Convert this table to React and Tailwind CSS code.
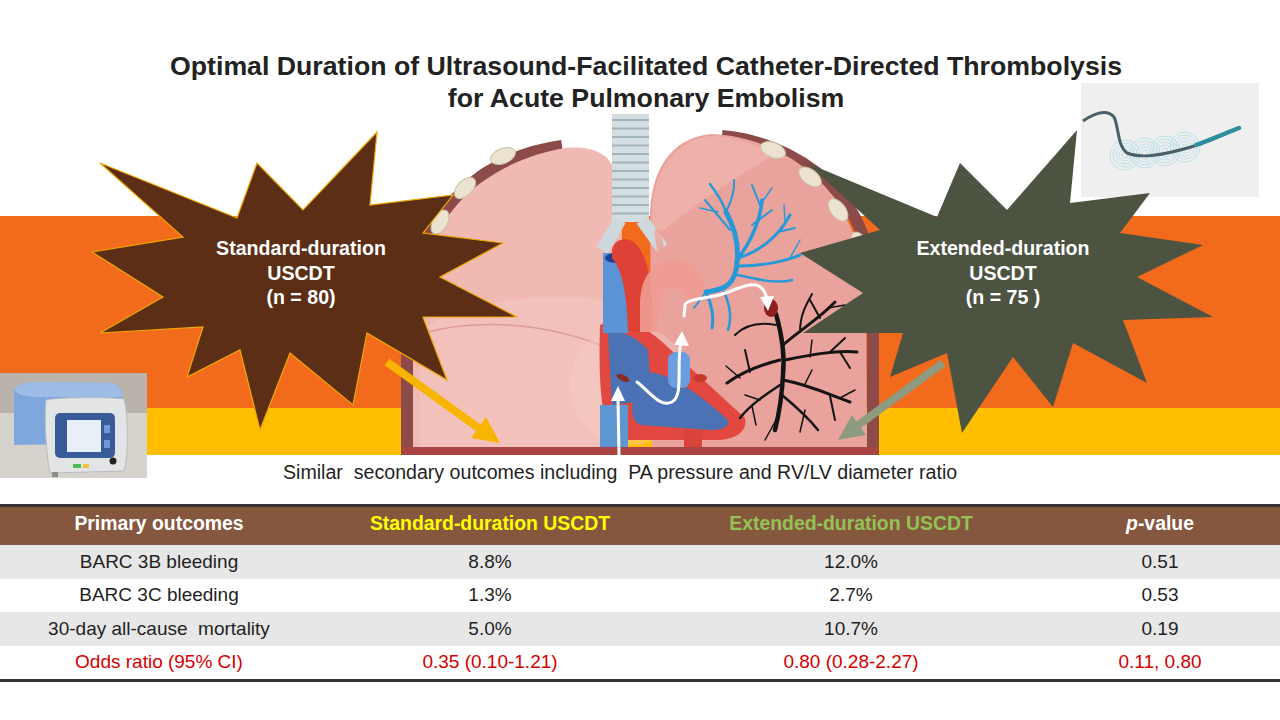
import React from "react"

const rows = [
  { label: "BARC 3B bleeding", std: "8.8%", ext: "12.0%", p: "0.51", shade: true },
  { label: "BARC 3C bleeding", std: "1.3%", ext: "2.7%", p: "0.53" },
  { label: "30-day all-cause  mortality", std: "5.0%", ext: "10.7%", p: "0.19", shade: true },
]

const leftStar =
  "100,163 237,218 257,163 303,210 377,132 370,205 453,195 423,233 503,243 440,277 517,317 423,317 447,380 367,333 353,405 290,353 260,430 240,350 187,377 203,327 100,333 163,297 92,252 183,237"
const rightStar =
  "807,163 937,217 960,163 1007,210 1077,130 1070,203 1150,193 1120,233 1203,245 1137,277 1213,317 1123,320 1147,383 1073,343 1053,407 1013,357 962,433 947,353 890,377 903,333 803,333 863,293 800,253 880,230"

const ribs = [
  [503, 156, -22],
  [465, 188, -45],
  [440, 222, -62],
  [773, 150, 22],
  [810, 177, 38],
  [838, 210, 52],
  [860, 244, 62],
]

function Lungs() {
  return (
    <svg className="absolute left-[400px] top-[112px]" width="480" height="345" viewBox="400 112 480 345">
      {/* ribcage rim */}
      <path d="M407,455 L407,330 C408,262 437,208 480,177 C505,160 532,150 562,146" stroke="#8c4b49" strokeWidth="12" fill="none" />
      <path d="M722,136 C768,140 812,162 840,195 C860,220 872,252 873,292 L873,455" stroke="#8c4b49" strokeWidth="12" fill="none" />
      {/* left lung */}
      <path d="M413,455 L413,335 C414,265 440,212 482,182 C510,162 540,152 565,148 C590,146 605,152 612,165 C620,180 622,205 622,245 L628,455 Z" fill="#f0bab3" />
      <path d="M420,330 C470,300 540,292 606,300 L616,455 L420,455 Z" fill="#f4c7c1" opacity="0.55" />
      <path d="M418,335 C470,318 540,322 600,345" stroke="#dc9d96" strokeWidth="1.5" fill="none" />
      {/* right lung */}
      <path d="M652,455 L650,212 C652,160 680,136 712,134 C760,136 805,160 832,195 C852,222 864,255 866,300 L867,455 Z" fill="#eaa39c" />
      <path d="M652,210 C655,165 680,138 712,136 C740,137 760,146 772,156 C740,175 700,200 652,240 Z" fill="#f0b7b0" opacity="0.7" />
      {ribs.map(([cx, cy, r], i) => (
        <ellipse key={i} cx={cx} cy={cy} rx="13" ry="7.5" transform={`rotate(${r} ${cx} ${cy})`} fill="#ebe3d0" stroke="#c9bea6" strokeWidth="1" />
      ))}
      {/* trachea */}
      <rect x="612" y="114" width="37" height="108" fill="#d4dde1" />
      {Array.from({ length: 12 }).map((_, i) => (
        <line key={i} x1="612" x2="649" y1={120 + i * 8.5} y2={120 + i * 8.5} stroke="#a3b3ba" strokeWidth="2" />
      ))}
      <path d="M620,220 L602,250" stroke="#cfd8dc" strokeWidth="13" />
      <path d="M642,220 L662,248" stroke="#cfd8dc" strokeWidth="13" />
      {/* heart */}
      <circle cx="630" cy="385" r="60" fill="#f6d0ca" opacity="0.35" />
      <path d="M600,325 C615,318 640,322 660,340 L745,418 C748,432 735,440 715,440 L620,440 C603,430 598,400 600,325 Z" fill="#e2483f" />
      <path d="M608,333 C620,330 635,335 648,350 L652,400 L612,405 Z" fill="#4a72b4" />
      <path d="M645,372 C670,372 700,395 728,420 C730,428 720,430 710,430 L640,425 C628,420 630,395 645,372 Z" fill="#4a72b4" />
      <rect x="603" y="253" width="26" height="80" fill="#5a93d6" />
      <ellipse cx="616" cy="258" rx="11" ry="5" fill="#1f3e92" />
      <rect x="600" y="405" width="28" height="50" fill="#5e96d4" />
      <rect x="684" y="430" width="18" height="25" fill="#d8443c" />
      <path d="M612,250 C614,238 628,236 636,244 C650,260 654,292 652,332 L628,332 C627,300 624,272 612,258 Z" fill="#de4136" />
      <path d="M658,232 L662,262 M672,228 L674,262 M686,232 L684,262" stroke="#eda49b" strokeWidth="7" opacity="0.8" strokeLinecap="round" />
      <path d="M640,305 C640,275 656,258 678,260 C700,262 708,284 706,302 L688,304 C686,292 676,285 666,290 C658,296 658,318 658,332 L640,332 Z" fill="#ef9c93" opacity="0.9" />
      <rect x="668" y="352" width="22" height="36" rx="8" fill="#6a9ee0" />
      <ellipse cx="623" cy="378" rx="7" ry="3" transform="rotate(25 623 378)" fill="#8c2a24" />
      <ellipse cx="700" cy="378" rx="7" ry="4" fill="#c7382f" />
      {/* blue pulmonary tree */}
      <g stroke="#2799d8" fill="none" strokeLinecap="round">
        <path d="M706,292 C720,290 732,288 736,270 C740,250 736,230 726,212" strokeWidth="5" />
        <path d="M736,262 C748,245 760,225 762,200" strokeWidth="3.5" />
        <path d="M738,258 C758,252 778,238 790,215" strokeWidth="3" />
        <path d="M740,266 C765,266 788,260 800,255" strokeWidth="3" />
        <path d="M738,275 C760,280 778,284 792,280" strokeWidth="2.5" />
        <path d="M726,212 C722,200 716,192 710,184" strokeWidth="2.5" />
        <path d="M726,212 C732,200 735,190 734,180" strokeWidth="2" />
        <path d="M730,230 L705,200" strokeWidth="2" />
        <path d="M718,212 L700,208" strokeWidth="1.5" />
        <path d="M752,225 L772,210" strokeWidth="2" />
        <path d="M760,205 L752,185" strokeWidth="2" />
        <path d="M760,205 L772,188" strokeWidth="1.5" />
        <path d="M778,232 L795,228" strokeWidth="2" />
        <path d="M785,222 L784,205" strokeWidth="1.5" />
        <path d="M790,258 L800,240" strokeWidth="1.5" />
        <path d="M706,292 C712,305 714,318 712,328" strokeWidth="3" />
        <path d="M724,292 C730,305 732,318 728,330" strokeWidth="2.5" />
        <path d="M706,292 L694,308" strokeWidth="2" />
      </g>
      {/* black tree */}
      <g stroke="#141414" fill="none" strokeLinecap="round">
        <path d="M776,314 C782,335 785,355 783,375 C782,395 780,410 775,430" strokeWidth="4.5" />
        <path d="M783,345 C800,330 820,318 835,302" strokeWidth="3" />
        <path d="M785,360 C810,355 835,350 857,352" strokeWidth="3" />
        <path d="M783,380 C810,385 830,395 850,402" strokeWidth="3" />
        <path d="M782,395 C800,410 810,420 818,430" strokeWidth="2.5" />
        <path d="M780,360 C760,365 742,372 727,383" strokeWidth="3" />
        <path d="M780,385 C765,395 750,405 740,418" strokeWidth="2.5" />
        <path d="M776,325 C760,322 745,325 735,335" strokeWidth="2" />
        <path d="M750,372 L745,350" strokeWidth="2" />
        <path d="M740,378 L726,366" strokeWidth="1.5" />
        <path d="M760,400 L745,395" strokeWidth="1.5" />
        <path d="M752,406 L756,425" strokeWidth="1.5" />
        <path d="M820,318 L810,300" strokeWidth="2" />
        <path d="M828,308 L845,305" strokeWidth="1.5" />
        <path d="M830,352 L845,338" strokeWidth="2" />
        <path d="M840,352 L850,368" strokeWidth="2" />
        <path d="M830,396 L835,420" strokeWidth="2" />
        <path d="M840,398 L855,390" strokeWidth="1.5" />
        <path d="M805,410 L800,432" strokeWidth="1.5" />
        <path d="M776,420 L765,440" strokeWidth="1.5" />
        <path d="M800,332 C800,315 806,305 812,294" strokeWidth="2" />
        <path d="M810,357 L812,340" strokeWidth="1.5" />
        <path d="M805,384 L812,370" strokeWidth="1.5" />
      </g>
      <ellipse cx="771" cy="308" rx="7" ry="9" fill="#8e1e1e" />
      {/* diaphragm */}
      <rect x="402" y="447" width="476" height="8" fill="#a94442" />
      {/* flow arrows */}
      <g stroke="#ffffff" strokeWidth="3" fill="none" strokeLinecap="round">
        <path d="M619,455 L618,398" />
        <path d="M637,382 C650,392 660,408 672,402 C684,395 676,365 681,342" />
        <path d="M684,316 L685,305 C686,300 700,299 715,296 C730,293 745,283 756,285 C764,287 766,294 767,300" />
      </g>
      <g fill="#ffffff">
        <polygon points="618,386 611,401 625,401" />
        <polygon points="682,331 674,345 689,346" />
        <polygon points="768,311 760,297 774,296" />
      </g>
    </svg>
  )
}

function Device() {
  return (
    <svg className="absolute left-0 top-[373px]" width="147" height="105" viewBox="0 0 147 105">
      <rect width="147" height="105" fill="#d6d2cc" />
      <rect width="147" height="40" fill="#b9b3ab" />
      <path d="M14,16 C18,10 28,9 40,9 L110,10 C118,11 122,16 122,24 L122,70 L14,72 Z" fill="#7fa7dd" />
      <path d="M14,16 C18,10 28,9 40,9 L110,10 C118,11 122,16 122,24 L40,24 C26,24 16,22 14,16 Z" fill="#9dbde8" />
      <path d="M46,27 C60,24 110,24 124,26 C128,40 129,80 124,98 L50,100 C46,80 44,45 46,27 Z" fill="#e3e4e6" stroke="#b9bcc2" strokeWidth="1" />
      <rect x="55" y="40" width="60" height="45" rx="5" fill="#3a5b9a" />
      <rect x="67" y="47" width="34" height="32" fill="#e9eff6" />
      <rect x="104" y="52" width="6" height="8" fill="#6f9ad6" />
      <rect x="104" y="67" width="6" height="8" fill="#6f9ad6" />
      <rect x="73" y="91" width="8" height="4" fill="#4bbb55" />
      <rect x="83" y="91" width="6" height="4" fill="#f1c23c" />
      <circle cx="113" cy="88" r="3.5" fill="#222" />
      <rect x="52" y="99" width="6" height="5" fill="#8c8c8c" />
    </svg>
  )
}

function Catheter() {
  return (
    <svg className="absolute left-[1081px] top-[83px]" width="178" height="114" viewBox="0 0 178 114">
      <rect width="178" height="114" fill="#efefef" />
      <g stroke="#a7dbe6" strokeWidth="0.8" fill="none" opacity="0.85">
        {[44, 64, 84, 104].map((cx, i) =>
          [3, 6, 9, 12, 15].map((r) => <circle key={`${i}-${r}`} cx={cx} cy={i === 3 ? 64 : 72 - i * 2} r={r} />)
        )}
      </g>
      <path d="M2,38 C14,30 26,26 33,34 C38,44 36,62 46,70 C60,76 82,72 110,64 C130,58 142,52 150,48" stroke="#4b5f68" strokeWidth="3" fill="none" />
      <path d="M115,62 C132,56 145,50 158,45" stroke="#2f8e9e" strokeWidth="4.5" fill="none" strokeLinecap="round" />
    </svg>
  )
}

export default function App() {
  return (
    <div className="relative h-[720px] w-[1280px] overflow-hidden bg-white font-['Liberation_Sans',Arial,sans-serif] text-[#1f1f1f]">
      <h1 className="pl-[12px] pt-[50px] text-center text-[26.7px] font-bold leading-[32px] text-[#222]">
        Optimal Duration of Ultrasound-Facilitated Catheter-Directed Thrombolysis
        <br />
        for Acute Pulmonary Embolism
      </h1>

      <div className="mt-[102px] h-[192px] bg-[#f26a1c]" />
      <div className="h-[47px] bg-[#ffbf00]" />

      <p className="mt-[6px] whitespace-pre pl-[283px] text-[19.6px] leading-[22px]">
        Similar  secondary outcomes including  PA pressure and RV/LV diameter ratio
      </p>

      <div className="mt-[21px] border-y-[3px] border-[#333]">
        <div className="grid h-[38px] grid-cols-[318px_344px_378px_240px] items-center bg-[#86573f] pb-[5px] text-center text-[19.4px] font-bold">
          <div className="text-white">Primary outcomes</div>
          <div className="text-[#ffff00]">Standard-duration USCDT</div>
          <div className="text-[#92c353]">Extended-duration USCDT</div>
          <div className="text-white">
            <i>p</i>-value
          </div>
        </div>
        {rows.map((r) => (
          <div
            key={r.label}
            className={`grid h-[33.5px] grid-cols-[318px_344px_378px_240px] items-center text-center text-[19px] ${r.shade ? "bg-[#e7e7e7]" : "bg-white"}`}
          >
            <div className="whitespace-pre">{r.label}</div>
            <div>{r.std}</div>
            <div>{r.ext}</div>
            <div>{r.p}</div>
          </div>
        ))}
        <div className="grid h-[33.5px] grid-cols-[318px_344px_378px_240px] items-center bg-white text-center text-[19px] text-[#d40000]">
          <div>Odds ratio (95% CI)</div>
          <div>0.35 (0.10-1.21)</div>
          <div>0.80 (0.28-2.27)</div>
          <div>0.11, 0.80</div>
        </div>
      </div>

      {/* illustrations laid over the bands */}
      <Lungs />
      <Device />
      <Catheter />

      <svg className="pointer-events-none absolute left-0 top-0" width="1280" height="720">
        <polygon points={leftStar} fill="#5c2e16" stroke="#f2a900" strokeWidth="1.2" />
        <polygon points={rightStar} fill="#4c5340" />
        <line x1="387" y1="362" x2="480" y2="429" stroke="#f7b500" strokeWidth="8" />
        <polygon points="500,443 471,438 486,417" fill="#f7b500" />
        <line x1="943" y1="363" x2="857" y2="426" stroke="#8e9b7e" strokeWidth="8" />
        <polygon points="838,440 866,435 852,415" fill="#8e9b7e" />
      </svg>

      <div className="absolute left-[201px] top-[236px] w-[200px] text-center text-[19.6px] font-bold leading-[24.5px] text-white">
        Standard-duration
        <br />
        USCDT
        <br />
        (n = 80)
      </div>
      <div className="absolute left-[903px] top-[236px] w-[200px] text-center text-[19.6px] font-bold leading-[24.5px] text-white">
        Extended-duration
        <br />
        USCDT
        <br />
        (n = 75 )
      </div>
    </div>
  )
}
